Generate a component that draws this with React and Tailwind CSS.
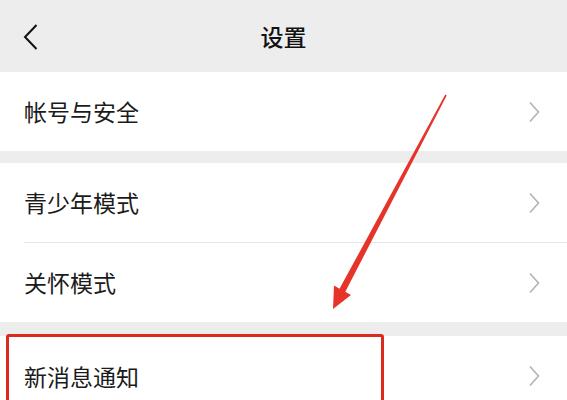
import React from "react";

function Chevron() {
  return (
    <svg width="14" height="22" viewBox="0 0 14 22" className="shrink-0">
      <path d="M3 1.5 L11.5 11 L3 20.5" fill="none" stroke="#b3b3b3" strokeWidth="1.6" />
    </svg>
  );
}

function Row({ label, h }) {
  return (
    <div className={`flex items-center justify-between bg-white pl-[24px] pr-[26px] ${h}`}>
      <span className="text-[23px] leading-none text-[#1b1b1b]">{label}</span>
      <Chevron />
    </div>
  );
}

export default function App() {
  return (
    <div
      className="relative w-[567px] h-[400px] overflow-hidden bg-[#ededed]"
      style={{ fontFamily: '"Noto Sans CJK SC", "Noto Sans", sans-serif' }}
    >
      <div className="relative flex h-[72px] items-center justify-center bg-[#ededed]">
        <svg width="16" height="26" viewBox="0 0 16 26" className="absolute left-[23px] top-[24px]">
          <path d="M13.5 1 L2 13 L13.5 25" fill="none" stroke="#111" strokeWidth="2" />
        </svg>
        <span className="text-[23px] font-medium leading-none text-[#111]">设置</span>
      </div>
      <Row label="帐号与安全" h="h-[79px]" />
      <div className="h-[12px]" />
      <Row label="青少年模式" h="h-[79px]" />
      <div className="bg-white pl-[24px]">
        <div className="h-px bg-[#e6e6e6]" />
      </div>
      <Row label="关怀模式" h="h-[79px]" />
      <div className="h-[14px]" />
      <div className="relative">
        <Row label="新消息通知" h="h-[80px]" />
        <div className="absolute left-[6px] top-[-2px] h-[120px] w-[378px] rounded-[3px] border-[3px] border-[#dc2a1f]" />
      </div>
      <svg className="pointer-events-none absolute left-0 top-0" width="567" height="400" viewBox="0 0 567 400">
        <polygon
          points="445.3,94.6 446.7,95.4 345.3,291.8 351,295 333,309 334,285.6 339.5,288.8"
          fill="#e6342a"
        />
      </svg>
    </div>
  );
}
